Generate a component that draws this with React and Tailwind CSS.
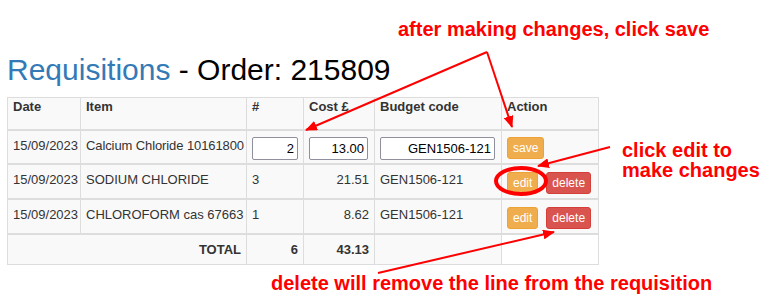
import React from "react";

const font = { fontFamily: '"Liberation Sans", Arial, sans-serif' };

function Btn({ kind, children }) {
  const cls =
    kind === "danger"
      ? "bg-[#d9534f] border-[#d43f3a]"
      : "bg-[#f0ad4e] border-[#eea236]";
  return (
    <button
      className={`inline-block h-[22px] px-[5px] border rounded-[3px] text-white text-[12px] leading-[18px] align-top ${cls}`}
    >
      {children}
    </button>
  );
}

function Input({ value, w }) {
  return (
    <input
      readOnly
      value={value}
      className={`${w} h-[23px] border border-[#8f8f9d] rounded-[2px] bg-white text-right pr-[3px] text-[13px] text-black`}
      style={font}
    />
  );
}

export default function App() {
  const td = "border-x border-[#ddd] px-[5px] align-top whitespace-nowrap";
  return (
    <div className="relative w-[775px] h-[306px] bg-white overflow-hidden" style={font}>
      <div className="pt-[53px] pl-[7px]">
        <h2 className="text-[30px] leading-[33px] text-black">
          <span className="text-[#337ab7]">Requisitions</span> - Order: 215809
        </h2>
        <table className="mt-[11px] border-collapse table-fixed w-[591px] text-[13px] text-[#333] leading-[18.5px]">
          <colgroup>
            <col className="w-[73px]" />
            <col className="w-[166px]" />
            <col className="w-[57px]" />
            <col className="w-[71px]" />
            <col className="w-[127px]" />
            <col className="w-[97px]" />
          </colgroup>
          <thead>
            <tr className="h-[32px] bg-[#f9f9f9] border-t border-[#ddd] border-b-2 font-bold text-left">
              <th className={`${td} align-middle`}>Date</th>
              <th className={`${td} align-middle`}>Item</th>
              <th className={`${td} align-middle`}>#</th>
              <th className={`${td} align-middle`}>Cost £</th>
              <th className={`${td} align-middle`}>Budget code</th>
              <th className={`${td} align-middle`}>Action</th>
            </tr>
          </thead>
          <tbody>
            <tr className="h-[34px] bg-[#f9f9f9] border-b-2 border-[#ddd]">
              <td className={`${td} pt-[6px]`}>15/09/2023</td>
              <td className={`${td} pt-[6px] tracking-[-0.1px]`}>Calcium Chloride 10161800</td>
              <td className={`${td} pt-[6px]`}><Input value="2" w="w-[46px]" /></td>
              <td className={`${td} pt-[6px]`}><Input value="13.00" w="w-[59px]" /></td>
              <td className={`${td} pt-[6px]`}><Input value="GEN1506-121" w="w-[115px]" /></td>
              <td className={`${td} pt-[6px]`}><Btn>save</Btn></td>
            </tr>
            <tr className="h-[35px] bg-[#f9f9f9] border-b-2 border-[#ddd]">
              <td className={`${td} pt-[6px]`}>15/09/2023</td>
              <td className={`${td} pt-[6px]`}>SODIUM CHLORIDE</td>
              <td className={`${td} pt-[6px]`}>3</td>
              <td className={`${td} pt-[6px] text-right`}>21.51</td>
              <td className={`${td} pt-[6px]`}>GEN1506-121</td>
              <td className={`${td} pt-[7px]`}>
                <div className="flex gap-[8px]"><Btn>edit</Btn><Btn kind="danger">delete</Btn></div>
              </td>
            </tr>
            <tr className="h-[35px] bg-[#f9f9f9] border-b-2 border-[#ddd]">
              <td className={`${td} pt-[6px]`}>15/09/2023</td>
              <td className={`${td} pt-[6px]`}>CHLOROFORM cas 67663</td>
              <td className={`${td} pt-[6px]`}>1</td>
              <td className={`${td} pt-[6px] text-right`}>8.62</td>
              <td className={`${td} pt-[6px]`}>GEN1506-121</td>
              <td className={`${td} pt-[7px]`}>
                <div className="flex gap-[8px]"><Btn>edit</Btn><Btn kind="danger">delete</Btn></div>
              </td>
            </tr>
            <tr className="h-[31px] bg-[#f9f9f9] border-b border-[#ddd] font-bold">
              <td colSpan={2} className={`${td} pt-[6px] text-right`}>TOTAL</td>
              <td className={`${td} pt-[6px] text-right`}>6</td>
              <td className={`${td} pt-[6px] text-right`}>43.13</td>
              <td className={`${td}`}></td>
              <td className={`${td} bg-white`}></td>
            </tr>
          </tbody>
        </table>
      </div>

      {/* annotations overlay */}
      <svg className="absolute left-0 top-0 pointer-events-none" width="775" height="306">
        <defs>
          <marker id="ah" viewBox="0 0 12 10" refX="11" refY="5" markerWidth="6" markerHeight="5" orient="auto">
            <path d="M0,0 L12,5 L0,10 z" fill="#ff0000" />
          </marker>
        </defs>
        <g stroke="#ff0000" strokeWidth="2" fill="none">
          <line x1="487" y1="52" x2="306" y2="130" markerEnd="url(#ah)" />
          <line x1="487" y1="52" x2="512" y2="127" markerEnd="url(#ah)" />
          <line x1="610" y1="147" x2="538" y2="166" markerEnd="url(#ah)" />
          <line x1="378" y1="273" x2="554" y2="232" markerEnd="url(#ah)" />
          <ellipse cx="521" cy="181" rx="25" ry="13" strokeWidth="4" />
        </g>
      </svg>
      <div className="absolute left-[398px] top-[19px] text-[20px] leading-[20px] font-bold text-[#ff0000] whitespace-nowrap">
        after making changes, click save
      </div>
      <div className="absolute left-[622px] top-[140px] text-[20px] leading-[20px] font-bold text-[#ff0000] whitespace-nowrap">
        click edit to
        <br />
        make changes
      </div>
      <div className="absolute left-[271px] top-[273px] text-[20px] leading-[20px] font-bold text-[#ff0000] whitespace-nowrap">
        delete will remove the line from the requisition
      </div>
    </div>
  );
}
